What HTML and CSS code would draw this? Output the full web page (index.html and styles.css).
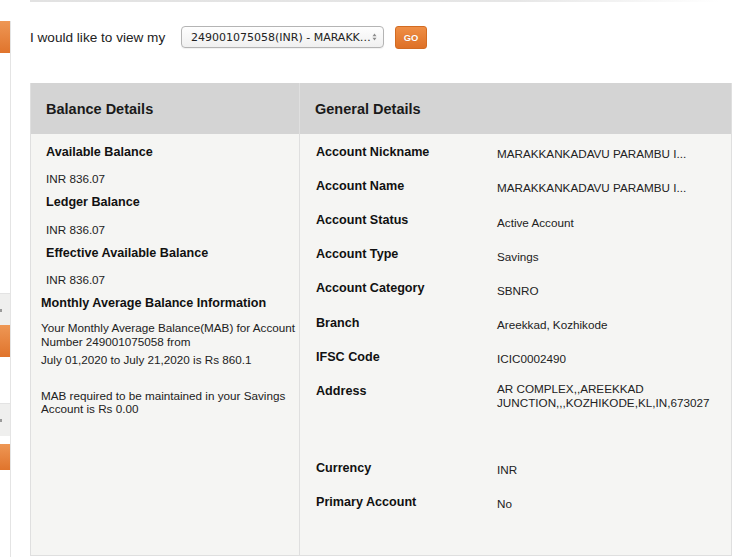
FILE: index.html
```html
<!DOCTYPE html>
<html lang="en">
<head>
<meta charset="utf-8">
<title>Account Details</title>
<link rel="stylesheet" href="styles.css">
</head>
<body>
<div class="layout">
  <aside class="rail">
    <div class="tab tab-orange tab-first"></div>
    <div class="tab tab-gray tab-g1"></div>
    <div class="tab tab-orange tab-o2"></div>
    <div class="tab tab-gray tab-g2"></div>
    <div class="tab tab-orange tab-o3"></div>
  </aside>
  <main class="main">
    <div class="topline"></div>
    <div class="view-row">
      <span class="view-label">I would like to view my</span>
      <div class="select">
        <span class="select-text">249001075058(INR) - MARAKK…</span>
        <svg class="select-arrows" width="5" height="8" viewBox="0 0 5 8"><path d="M0.5 3.2 L2.5 0.6 L4.5 3.2 Z M0.5 4.8 L2.5 7.4 L4.5 4.8 Z" fill="#8c8c8c"/></svg>
      </div>
      <button class="go" type="button">GO</button>
    </div>

    <section class="panel">
      <div class="col col-balance">
        <h2 class="col-head">Balance Details</h2>
        <div class="col-body body-balance">
          <div class="bal-list">
            <p class="lbl">Available Balance</p>
            <p class="val">INR 836.07</p>
            <p class="lbl">Ledger Balance</p>
            <p class="val">INR 836.07</p>
            <p class="lbl">Effective Available Balance</p>
            <p class="val">INR 836.07</p>
          </div>
          <p class="lbl mab-head">Monthly Average Balance Information</p>
          <p class="mab mab-1">Your Monthly Average Balance(MAB) for Account<br>Number 249001075058 from</p>
          <p class="mab mab-2">July 01,2020 to July 21,2020 is Rs 860.1</p>
          <p class="mab mab-3">MAB required to be maintained in your Savings<br>Account is Rs 0.00</p>
        </div>
      </div>
      <div class="col col-general">
        <h2 class="col-head">General Details</h2>
        <dl class="col-body body-general">
          <div class="row"><dt>Account Nickname</dt><dd>MARAKKANKADAVU PARAMBU I...</dd></div>
          <div class="row"><dt>Account Name</dt><dd>MARAKKANKADAVU PARAMBU I...</dd></div>
          <div class="row"><dt>Account Status</dt><dd>Active Account</dd></div>
          <div class="row"><dt>Account Type</dt><dd>Savings</dd></div>
          <div class="row"><dt>Account Category</dt><dd>SBNRO</dd></div>
          <div class="row"><dt>Branch</dt><dd>Areekkad, Kozhikode</dd></div>
          <div class="row"><dt>IFSC Code</dt><dd>ICIC0002490</dd></div>
          <div class="row row-addr"><dt>Address</dt><dd class="addr">AR COMPLEX,,AREEKKAD<br>JUNCTION,,,KOZHIKODE,KL,IN,673027</dd></div>
          <div class="row"><dt>Currency</dt><dd>INR</dd></div>
          <div class="row"><dt>Primary Account</dt><dd>No</dd></div>
        </dl>
      </div>
    </section>
  </main>
</div>
</body>
</html>
```
FILE: styles.css
```css
* { box-sizing: border-box; }
html, body { margin: 0; padding: 0; background: #fff; }
body {
  width: 750px;
  height: 557px;
  overflow: hidden;
  font-family: "Liberation Sans", Arial, Helvetica, sans-serif;
  color: #111;
}

.layout { display: flex; align-items: flex-start; }

/* left rail (cut-off navigation) */
.rail {
  width: 11px;
  flex: none;
  margin-top: 21px;
  height: 536px;
  border-right: 1px solid #e4e4e4;
  display: flex;
  flex-direction: column;
}
.tab { flex: none; }
.tab-orange { background: linear-gradient(#ee9755, #e0742c); }
.tab-gray {
  background: #efefee;
  border-top: 1px solid #e3e3e3;
  position: relative;
}
.tab-gray::before {
  content: "";
  position: absolute;
  left: 0;
  top: 50%;
  width: 2px;
  height: 3px;
  margin-top: -1px;
  background: #9a9a9a;
}
.tab-first { height: 32px; }
.tab-g1 { margin-top: 240px; height: 32px; }
.tab-o2 { height: 32px; }
.tab-g2 { margin-top: 46px; height: 33px; }
.tab-o3 { margin-top: 8px; height: 26px; }

.main { flex: 1; padding-left: 19px; }

.topline {
  height: 2px;
  width: 690px;
  background: linear-gradient(to right, #e2e2e2 0%, #e6e6e6 70%, rgba(235,235,235,0) 100%);
}

/* account picker */
.view-row {
  display: flex;
  align-items: flex-start;
  margin-top: 24px;
  height: 23px;
}
.view-label {
  font-size: 13.6px;
  line-height: 16px;
  margin-top: 3.5px;
  color: #222;
  width: 151px;
}
.select {
  width: 203px;
  height: 22px;
  margin-right: 11px;
  border: 1px solid #b4b4b4;
  border-radius: 4px;
  background: linear-gradient(#fefefe, #f0f0f0);
  box-shadow: 0 1px 1px rgba(0,0,0,0.06);
  display: flex;
  align-items: center;
  padding: 0 6px 0 9px;
  font-family: "DejaVu Sans", Verdana, sans-serif;
  font-size: 11px;
  color: #222;
}
.select-text { white-space: nowrap; }
.select-arrows { margin-left: auto; }

.go {
  width: 32px;
  height: 23px;
  padding: 0;
  border: 1px solid #d26b22;
  border-radius: 3px;
  background: linear-gradient(#ef8f46, #de7026);
  color: #fff;
  font-family: "Liberation Sans", Arial, sans-serif;
  font-weight: bold;
  font-size: 9.4px;
  text-shadow: 0 0 1px rgba(160,70,10,0.4);
}

/* details panel */
.panel {
  margin-top: 34px;
  display: grid;
  grid-template-columns: 270px 432px;
}
.col {
  border: 1px solid #dfdfdf;
  border-top: none;
  background: #f5f5f3;
  display: flex;
  flex-direction: column;
}
.col + .col { border-left: none; }
.col-head {
  margin: 0;
  height: 51px;
  background: #d4d4d4;
  display: flex;
  align-items: center;
  padding-left: 15px;
  font-size: 14.5px;
  font-weight: bold;
  color: #1a1a1a;
}
.col-body { height: 421px; margin: 0; }

.body-balance { padding: 9.7px 0 0 10px; }
.bal-list { padding-left: 5px; }
.lbl {
  margin: 0 0 11.3px;
  font-size: 12.6px;
  font-weight: bold;
  line-height: 16px;
  color: #111;
}
.val {
  margin: 0 0 7.3px;
  font-size: 11.7px;
  line-height: 16px;
  color: #222;
}
.mab-head { margin-bottom: 9.6px; }
.mab {
  margin: 0;
  font-size: 11.7px;
  color: #222;
}
.mab-1 { line-height: 14.4px; }
.mab-2 { line-height: 14.4px; margin-top: 2.9px; }
.mab-3 { line-height: 12.6px; margin-top: 23.2px; }

.body-general { padding: 9.7px 0 0 16px; }
.row {
  display: grid;
  grid-template-columns: 181px 1fr;
  height: 34.2px;
}
.row-addr { height: 76.7px; }
.row dt {
  font-size: 12.6px;
  font-weight: bold;
  line-height: 16px;
  color: #111;
}
.row dd {
  margin: 0;
  padding-top: 2.6px;
  font-size: 11.7px;
  line-height: 16px;
  color: #222;
  white-space: nowrap;
}
.row dd.addr {
  padding-top: 0;
  margin-top: -0.7px;
  line-height: 14px;
}
```
